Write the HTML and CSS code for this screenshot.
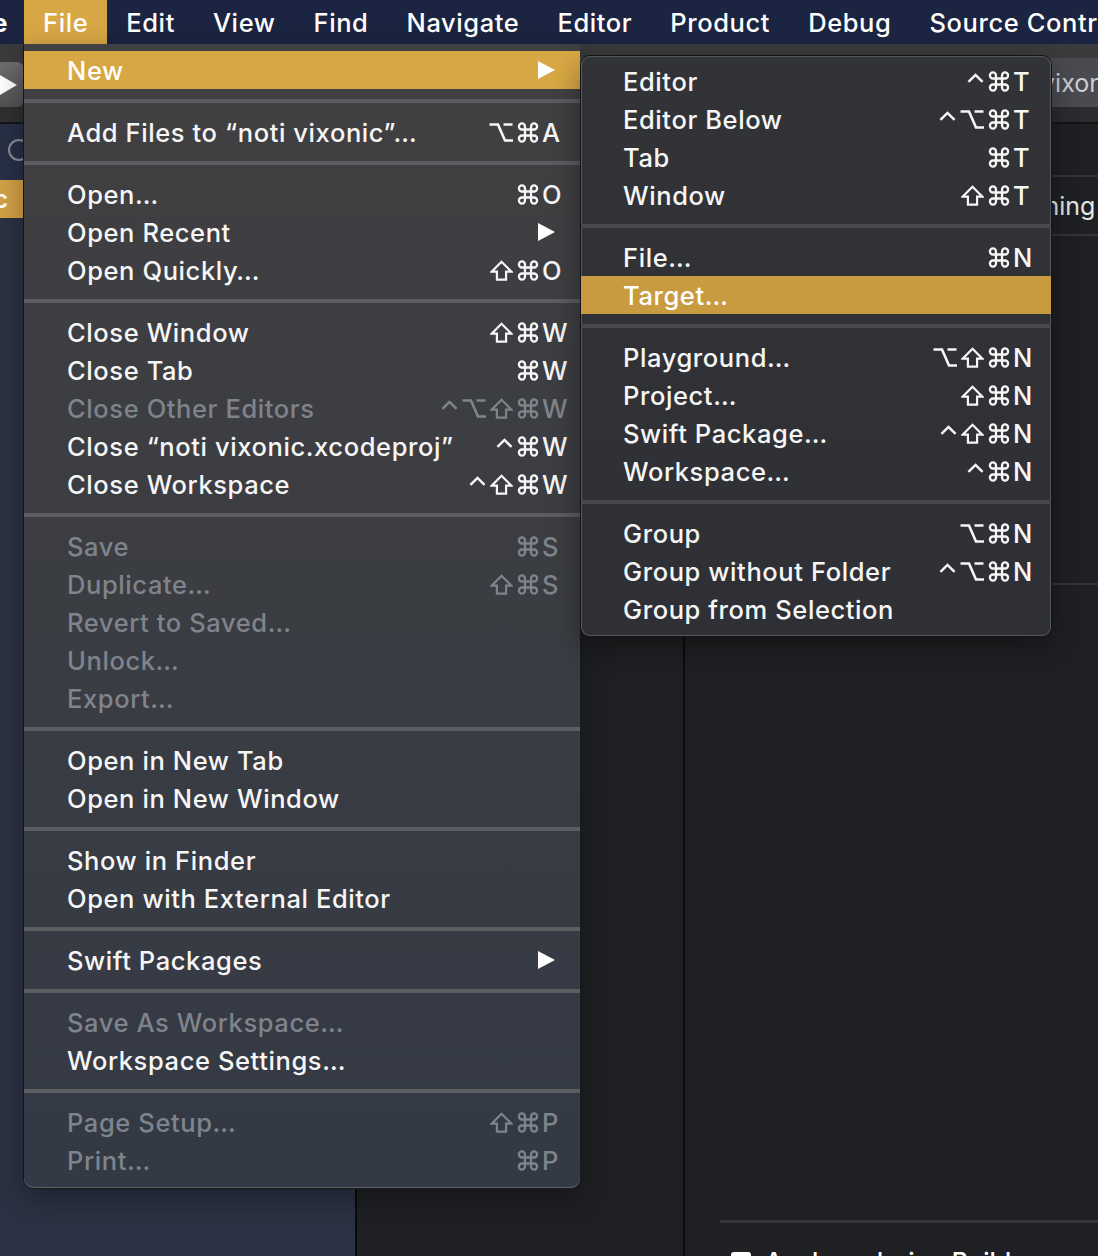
FILE: index.html
```html
<!DOCTYPE html>
<html lang="en">
<head>
<meta charset="utf-8">
<title>Xcode File Menu</title>
<link rel="stylesheet" href="styles.css">
</head>
<body>
<svg class="defs" width="0" height="0" aria-hidden="true">
  <symbol id="k-cmd" viewBox="1.6 1.6 20.8 20.8"><path d="M15 6v12a3 3 0 1 0 3-3H6a3 3 0 1 0 3 3V6a3 3 0 1 0-3 3h12a3 3 0 1 0-3-3" fill="none" stroke="currentColor" stroke-width="2.3"/></symbol>
  <symbol id="k-opt" viewBox="0 0 24 21"><path d="M0.5 2.5h8.5l7 16h8 M14.5 2.5h9" fill="none" stroke="currentColor" stroke-width="2.6"/></symbol>
  <symbol id="k-shift" viewBox="0 0 24 22"><path d="M12 1.8 L22.3 12.2 H16.8 V20.5 H7.2 V12.2 H1.7 Z" fill="none" stroke="currentColor" stroke-width="2.3" stroke-linejoin="miter"/></symbol>
  <symbol id="k-ctrl" viewBox="0 0 18 21"><path d="M1.5 11 L9 3.5 L16.5 11" fill="none" stroke="currentColor" stroke-width="2.6"/></symbol>
</svg>
<div class="screen">
  <header class="menubar">
    <span class="mb-item mb-app">Xcode</span>
    <span class="mb-item active">File</span>
    <span class="mb-item">Edit</span>
    <span class="mb-item">View</span>
    <span class="mb-item">Find</span>
    <span class="mb-item">Navigate</span>
    <span class="mb-item">Editor</span>
    <span class="mb-item">Product</span>
    <span class="mb-item">Debug</span>
    <span class="mb-item">Source Control</span>
  </header>

  <div class="toolbar">
    <div class="tb-left">
      <div class="run-btn"><svg width="20" height="22" viewBox="0 0 20 22"><polygon points="2,1 19,11 2,21" fill="#ffffff"/></svg></div>
    </div>
    <div class="tb-right">
      <div class="doc-tab">noti vixonic</div>
    </div>
  </div>

  <div class="workspace">
    <aside class="sidebar">
      <div class="nav-filter"><span class="ring"></span></div>
      <div class="nav-row selected"><span class="nav-name">noti vixonic</span></div>
    </aside>
    <div class="vdiv"></div>
    <main class="editor">
      <div class="targets"></div>
      <div class="vdiv"></div>
      <div class="settings">
        <div class="seg-space"></div>
        <div class="seg-tabs"><span>General</span><span>Signing &amp; Capabilities</span><span>Resource Tags</span></div>
        <div class="settings-body"></div>
        <div class="settings-lower">
          <div class="lower-rule"></div>
          <div class="lower-row"><span class="check"></span><span>Analyze during Build</span></div>
        </div>
      </div>
    </main>
  </div>

  <div class="menu file-menu">
    <div class="mi hl"><span class="label">New</span><span class="arrow"><svg width="18" height="18" viewBox="0 0 18 18"><polygon points="1,0 18,9 1,18" fill="#ffffff"/></svg></span></div>
    <div class="sep"></div>
    <div class="mi"><span class="label">Add Files to “noti vixonic”…</span><span class="sc"><span class="mods"><svg class="k-o"><use href="#k-opt"/></svg><svg class="k-c"><use href="#k-cmd"/></svg></span><span class="key">A</span></span></div>
    <div class="sep"></div>
    <div class="mi"><span class="label">Open…</span><span class="sc"><span class="mods"><svg class="k-c"><use href="#k-cmd"/></svg></span><span class="key">O</span></span></div>
    <div class="mi"><span class="label">Open Recent</span><span class="arrow"><svg width="18" height="18" viewBox="0 0 18 18"><polygon points="1,0 18,9 1,18" fill="#ffffff"/></svg></span></div>
    <div class="mi"><span class="label">Open Quickly…</span><span class="sc"><span class="mods"><svg class="k-s"><use href="#k-shift"/></svg><svg class="k-c"><use href="#k-cmd"/></svg></span><span class="key">O</span></span></div>
    <div class="sep"></div>
    <div class="mi"><span class="label">Close Window</span><span class="sc"><span class="mods"><svg class="k-s"><use href="#k-shift"/></svg><svg class="k-c"><use href="#k-cmd"/></svg></span><span class="key">W</span></span></div>
    <div class="mi"><span class="label">Close Tab</span><span class="sc"><span class="mods"><svg class="k-c"><use href="#k-cmd"/></svg></span><span class="key">W</span></span></div>
    <div class="mi off"><span class="label">Close Other Editors</span><span class="sc"><span class="mods"><svg class="k-t"><use href="#k-ctrl"/></svg><svg class="k-o"><use href="#k-opt"/></svg><svg class="k-s"><use href="#k-shift"/></svg><svg class="k-c"><use href="#k-cmd"/></svg></span><span class="key">W</span></span></div>
    <div class="mi"><span class="label">Close “noti vixonic.xcodeproj”</span><span class="sc"><span class="mods"><svg class="k-t"><use href="#k-ctrl"/></svg><svg class="k-c"><use href="#k-cmd"/></svg></span><span class="key">W</span></span></div>
    <div class="mi"><span class="label">Close Workspace</span><span class="sc"><span class="mods"><svg class="k-t"><use href="#k-ctrl"/></svg><svg class="k-s"><use href="#k-shift"/></svg><svg class="k-c"><use href="#k-cmd"/></svg></span><span class="key">W</span></span></div>
    <div class="sep"></div>
    <div class="mi off"><span class="label">Save</span><span class="sc"><span class="mods"><svg class="k-c"><use href="#k-cmd"/></svg></span><span class="key">S</span></span></div>
    <div class="mi off"><span class="label">Duplicate…</span><span class="sc"><span class="mods"><svg class="k-s"><use href="#k-shift"/></svg><svg class="k-c"><use href="#k-cmd"/></svg></span><span class="key">S</span></span></div>
    <div class="mi off"><span class="label">Revert to Saved…</span></div>
    <div class="mi off"><span class="label">Unlock…</span></div>
    <div class="mi off"><span class="label">Export…</span></div>
    <div class="sep"></div>
    <div class="mi"><span class="label">Open in New Tab</span></div>
    <div class="mi"><span class="label">Open in New Window</span></div>
    <div class="sep"></div>
    <div class="mi"><span class="label">Show in Finder</span></div>
    <div class="mi"><span class="label">Open with External Editor</span></div>
    <div class="sep"></div>
    <div class="mi"><span class="label">Swift Packages</span><span class="arrow"><svg width="18" height="18" viewBox="0 0 18 18"><polygon points="1,0 18,9 1,18" fill="#ffffff"/></svg></span></div>
    <div class="sep"></div>
    <div class="mi off"><span class="label">Save As Workspace…</span></div>
    <div class="mi"><span class="label">Workspace Settings…</span></div>
    <div class="sep"></div>
    <div class="mi off"><span class="label">Page Setup…</span><span class="sc"><span class="mods"><svg class="k-s"><use href="#k-shift"/></svg><svg class="k-c"><use href="#k-cmd"/></svg></span><span class="key">P</span></span></div>
    <div class="mi off"><span class="label">Print…</span><span class="sc"><span class="mods"><svg class="k-c"><use href="#k-cmd"/></svg></span><span class="key">P</span></span></div>
  </div>

  <div class="menu submenu">
    <div class="mi"><span class="label">Editor</span><span class="sc"><span class="mods"><svg class="k-t"><use href="#k-ctrl"/></svg><svg class="k-c"><use href="#k-cmd"/></svg></span><span class="key">T</span></span></div>
    <div class="mi"><span class="label">Editor Below</span><span class="sc"><span class="mods"><svg class="k-t"><use href="#k-ctrl"/></svg><svg class="k-o"><use href="#k-opt"/></svg><svg class="k-c"><use href="#k-cmd"/></svg></span><span class="key">T</span></span></div>
    <div class="mi"><span class="label">Tab</span><span class="sc"><span class="mods"><svg class="k-c"><use href="#k-cmd"/></svg></span><span class="key">T</span></span></div>
    <div class="mi"><span class="label">Window</span><span class="sc"><span class="mods"><svg class="k-s"><use href="#k-shift"/></svg><svg class="k-c"><use href="#k-cmd"/></svg></span><span class="key">T</span></span></div>
    <div class="sep"></div>
    <div class="mi"><span class="label">File…</span><span class="sc"><span class="mods"><svg class="k-c"><use href="#k-cmd"/></svg></span><span class="key">N</span></span></div>
    <div class="mi hl"><span class="label">Target…</span></div>
    <div class="sep"></div>
    <div class="mi"><span class="label">Playground…</span><span class="sc"><span class="mods"><svg class="k-o"><use href="#k-opt"/></svg><svg class="k-s"><use href="#k-shift"/></svg><svg class="k-c"><use href="#k-cmd"/></svg></span><span class="key">N</span></span></div>
    <div class="mi"><span class="label">Project…</span><span class="sc"><span class="mods"><svg class="k-s"><use href="#k-shift"/></svg><svg class="k-c"><use href="#k-cmd"/></svg></span><span class="key">N</span></span></div>
    <div class="mi"><span class="label">Swift Package…</span><span class="sc"><span class="mods"><svg class="k-t"><use href="#k-ctrl"/></svg><svg class="k-s"><use href="#k-shift"/></svg><svg class="k-c"><use href="#k-cmd"/></svg></span><span class="key">N</span></span></div>
    <div class="mi"><span class="label">Workspace…</span><span class="sc"><span class="mods"><svg class="k-t"><use href="#k-ctrl"/></svg><svg class="k-c"><use href="#k-cmd"/></svg></span><span class="key">N</span></span></div>
    <div class="sep"></div>
    <div class="mi"><span class="label">Group</span><span class="sc"><span class="mods"><svg class="k-o"><use href="#k-opt"/></svg><svg class="k-c"><use href="#k-cmd"/></svg></span><span class="key">N</span></span></div>
    <div class="mi"><span class="label">Group without Folder</span><span class="sc"><span class="mods"><svg class="k-t"><use href="#k-ctrl"/></svg><svg class="k-o"><use href="#k-opt"/></svg><svg class="k-c"><use href="#k-cmd"/></svg></span><span class="key">N</span></span></div>
    <div class="mi"><span class="label">Group from Selection</span></div>
  </div>
</div>
</body>
</html>
```

FILE: styles.css
```css
* { box-sizing: border-box; }
html, body { margin: 0; padding: 0; }
body {
  width: 1098px;
  height: 1256px;
  overflow: hidden;
  background: #1f2023;
  font-family: "Inter", "Noto Sans", sans-serif;
  font-weight: 500;
  color: #f4f4f4;
}
.defs { position: absolute; width: 0; height: 0; overflow: hidden; }
.screen {
  position: relative;
  width: 1098px;
  height: 1256px;
  display: flex;
  flex-direction: column;
  overflow: hidden;
}

/* menu bar */
.menubar {
  height: 44px;
  flex: none;
  background: #1b2440;
  display: flex;
  align-items: stretch;
  white-space: nowrap;
  overflow: hidden;
}
.mb-item {
  flex: none;
  display: flex;
  align-items: center;
  padding: 0 19px;
  font-size: 25.5px;
  letter-spacing: 0.6px;
  color: #ffffff;
}
.mb-app {
  width: 24px;
  padding: 0 16px 0 0;
  justify-content: flex-end;
  overflow: hidden;
  font-weight: 700;
}
.mb-item.active { background: #d8a745; }

/* toolbar */
.toolbar {
  height: 80px;
  flex: none;
  display: flex;
  background: #3a3a3c;
  border-bottom: 2px solid #141414;
}
.tb-left {
  width: 355px;
  flex: none;
  display: flex;
  flex-direction: column;
  padding-top: 18px;
  background: linear-gradient(#3b3b3d 0, #3b3b3d 63px, #2f3032 63px);
}
.run-btn {
  width: 52px;
  height: 45px;
  margin-left: -28px;
  border-radius: 7px;
  background: linear-gradient(#6e6e70, #525254);
  display: flex;
  align-items: center;
  justify-content: flex-end;
  padding-right: 6px;
}
.tb-right {
  flex: 1;
  min-width: 0;
  display: flex;
  flex-direction: column;
  padding-top: 14px;
  background: linear-gradient(#3b3b3d 0, #3b3b3d 63px, #2b2c2f 63px);
}
.doc-tab {
  height: 49px;
  background: #4a4b4f;
  color: #cfcfd1;
  font-size: 25px;
  font-weight: 400;
  display: flex;
  align-items: center;
  padding-left: 635px;
  white-space: nowrap;
  overflow: hidden;
}

/* workspace */
.workspace {
  flex: 1;
  display: flex;
  min-height: 0;
}
.sidebar {
  width: 355px;
  flex: none;
  background: #2b3243;
  display: flex;
  flex-direction: column;
}
.nav-filter {
  height: 56px;
  padding: 15px 0 0 8px;
  background: #283047;
}
.ring {
  display: block;
  width: 22px;
  height: 22px;
  border: 2px solid #8a8e97;
  border-radius: 50%;
}
.nav-row {
  height: 38px;
  display: flex;
  align-items: center;
  font-size: 25px;
  font-weight: 600;
  white-space: nowrap;
  overflow: hidden;
}
.nav-row.selected { background: #d3a248; color: #fff; }
.nav-name {
  flex: none;
  width: 160px;
  margin-left: -152px;
  text-align: right;
}

.vdiv { width: 2px; flex: none; background: #0b0b0c; }
.editor {
  flex: 1;
  min-width: 0;
  display: flex;
  background: #1f2023;
}
.targets { width: 326px; flex: none; background: #1f2023; }
.settings {
  flex: 1;
  min-width: 0;
  display: flex;
  flex-direction: column;
  overflow: hidden;
}
.seg-space { flex: none; height: 53px; border-bottom: 2px solid #343538; }
.seg-tabs {
  flex: none;
  height: 59px;
  border-bottom: 2px solid #343538;
  display: flex;
  align-items: center;
  gap: 40px;
  padding-left: 190px;
  font-size: 25px;
  font-weight: 400;
  color: #e6e6e6;
  white-space: nowrap;
  overflow: hidden;
}
.settings-body { flex: none; height: 349px; border-bottom: 2px solid #343538; }
.settings-lower { flex: none; display: flex; flex-direction: column; padding-top: 635px; }
.lower-rule { height: 3px; margin-left: 35px; background: #37383b; }
.lower-row {
  display: flex;
  align-items: center;
  gap: 14px;
  padding: 24px 0 0 46px;
  font-size: 25px;
  line-height: 30px;
  color: #ffffff;
  white-space: nowrap;
}
.check { width: 20px; height: 20px; background: #ffffff; border-radius: 3px; flex: none; }

/* menus */
.menu {
  position: absolute;
  font-size: 25.5px;
  letter-spacing: 0.6px;
  white-space: nowrap;
}
.file-menu {
  left: 24px;
  top: 44px;
  width: 556px;
  height: 1144px;
  padding: 7px 0 9px;
  background: linear-gradient(180deg, #414042 0%, #3b3d42 45%, #333945 100%);
  border-radius: 0 0 9px 9px;
  box-shadow: -1px 0 0 #151515, 0 1px 0 #1a1a1a, inset 0 -1px 0 #5c6068, 0 10px 30px rgba(0,0,0,.35);
}
.submenu {
  left: 581px;
  top: 56px;
  width: 470px;
  height: 580px;
  padding: 6px 0 8px;
  background: linear-gradient(180deg, #323337 0%, #2e3035 100%);
  border-radius: 9px;
  box-shadow: 0 0 0 1px #141414, inset 0 0 0 1px #55585e, 0 10px 30px rgba(0,0,0,.4);
}
.mi {
  height: 38px;
  display: flex;
  align-items: center;
  padding: 0 9px 0 43px;
  color: #f6f6f6;
}
.submenu .mi { padding: 0 9px 0 42px; }
.mi.hl { background: #d8a745; color: #ffffff; }
.submenu .mi.hl { background: #c99b40; }
.mi.off { color: #7f848c; }
.label { flex: 1; }
.sc { display: flex; align-items: center; }
.mods {
  display: flex;
  align-items: center;
  gap: 4px;
  margin-right: 2px;
}
.mods svg { display: block; height: 21px; color: inherit; }
.k-c { width: 22px; }
.k-o { width: 24px; }
.k-s { width: 23px; height: 22px; }
.k-t { width: 17px; }
.key { width: 30px; padding-left: 1px; }
.arrow { display: flex; margin-right: 16px; }
.sep {
  height: 24px;
  display: flex;
  align-items: center;
}
.sep::before {
  content: "";
  flex: 1;
  height: 4px;
  background: #5b5d61;
}
.submenu .sep::before { background: #47494e; }
```
